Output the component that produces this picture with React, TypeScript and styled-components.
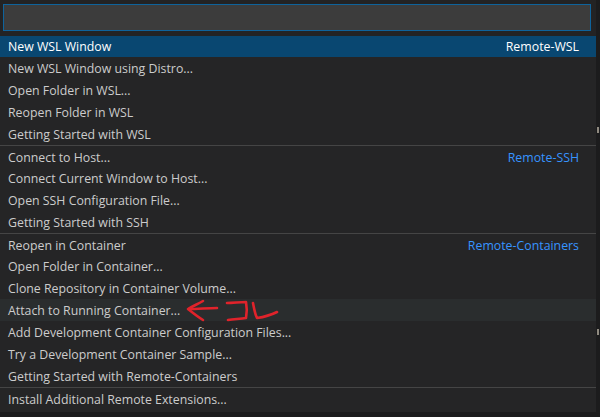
import React from "react";
import styled, { createGlobalStyle } from "styled-components";

const Global = createGlobalStyle`
  html, body { margin: 0; padding: 0; background: #1a1a1b; }
  #root { width: 600px; height: 417px; overflow: hidden; }
`;

const Page = styled.div`
  position: relative;
  width: 600px;
  height: 417px;
  display: flex;
  background: #1c1c1d;
  overflow: hidden;
`;

const Palette = styled.div`
  width: 596px;
  height: 412px;
  background: #252526;
  font-family: "Open Sans", "Noto Sans", sans-serif;
  font-size: 12.33px;
  display: flex;
  flex-direction: column;
`;

const Header = styled.div`
  height: 36px;
  box-sizing: border-box;
  padding: 4px 5px 0 3px;
  background: #232324;
`;

const Input = styled.div`
  height: 27px;
  box-sizing: border-box;
  background: #3c3c3c;
  border: 1px solid #0e639c;
`;

const Row = styled.div<{ $selected?: boolean; $hover?: boolean; $sep?: boolean }>`
  height: ${(p) => (p.$selected ? "21px" : "22px")};
  box-sizing: border-box;
  flex: none;
  display: flex;
  align-items: center;
  justify-content: space-between;
  padding: ${(p) => (p.$sep ? "1px" : "0")} 17px 0 8px;
  position: relative;
  color: ${(p) => (p.$selected ? "#ffffff" : "#cccccc")};
  background: ${(p) => (p.$selected ? "#094771" : p.$hover ? "#2a2d2e" : "transparent")};
  border-top: ${(p) => (p.$sep ? "1px solid #454545" : "none")};
`;

const Label = styled.span`
  white-space: nowrap;
`;

const Group = styled.span<{ $selected?: boolean }>`
  color: ${(p) => (p.$selected ? "#ffffff" : "#3794ff")};
  white-space: nowrap;
`;

const Note = styled.svg`
  position: absolute;
  left: 186px;
  top: 0;
  width: 94px;
  height: 24px;
  overflow: visible;
`;

const EdgeMark = styled.div<{ $top: number }>`
  position: absolute;
  right: 1px;
  top: ${(p) => p.$top}px;
  width: 2px;
  height: 6px;
  background: #8f8a80;
`;

type Item = { label: string; group?: string; selected?: boolean; hover?: boolean; sep?: boolean; note?: boolean };

const items: Item[] = [
  { label: "New WSL Window", group: "Remote-WSL", selected: true },
  { label: "New WSL Window using Distro..." },
  { label: "Open Folder in WSL..." },
  { label: "Reopen Folder in WSL" },
  { label: "Getting Started with WSL" },
  { label: "Connect to Host...", group: "Remote-SSH", sep: true },
  { label: "Connect Current Window to Host..." },
  { label: "Open SSH Configuration File..." },
  { label: "Getting Started with SSH" },
  { label: "Reopen in Container", group: "Remote-Containers", sep: true },
  { label: "Open Folder in Container..." },
  { label: "Clone Repository in Container Volume..." },
  { label: "Attach to Running Container...", hover: true, note: true },
  { label: "Add Development Container Configuration Files..." },
  { label: "Try a Development Container Sample..." },
  { label: "Getting Started with Remote-Containers" },
  { label: "Install Additional Remote Extensions...", sep: true },
];

export default function App() {
  return (
    <Page>
      <Global />
      <Palette>
        <Header>
          <Input />
        </Header>
        {items.map((it) => (
          <Row key={it.label} $selected={it.selected} $hover={it.hover} $sep={it.sep}>
            <Label>{it.label}</Label>
            {it.group && <Group $selected={it.selected}>{it.group}</Group>}
            {it.note && (
              <Note viewBox="0 0 94 24" fill="none" stroke="#e0232b" strokeWidth="2.6" strokeLinecap="round" strokeLinejoin="round">
                <path d="M17 2 C12 5 7 7 2 10 C7 14 12 18 17 21" />
                <path d="M3 10 C12 10 22 9 31 9" />
                <path d="M41 4 C47 4 54 3 60 3 C61 8 61 14 60 19 C54 20 48 20 42 21" />
                <path d="M67 4 C68 9 69 15 71 19 C78 18 85 16 91 13" />
              </Note>
            )}
          </Row>
        ))}
      </Palette>
      <EdgeMark $top={127} />
      <EdgeMark $top={329} />
    </Page>
  );
}
